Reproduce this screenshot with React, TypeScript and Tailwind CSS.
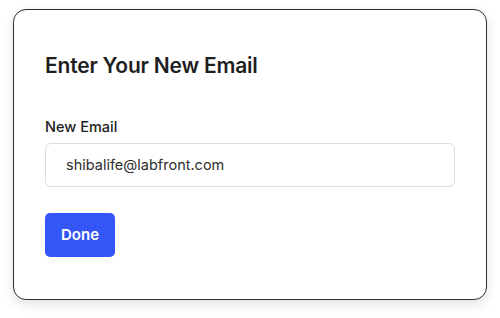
export default function App() {
  return (
    <div className="w-[500px] h-[318px] bg-white pt-[9px] px-[13px] font-['Inter',sans-serif]">
      <div className="h-[291px] rounded-[13px] border-[1.5px] border-[#2e2e2e] bg-white pl-[31px] pr-[31px] pt-[42px] shadow-[0_4px_12px_rgba(0,0,0,0.12)]">
        <h1 className="text-[21px] leading-[28px] font-semibold text-[#1f1f1f] tracking-[-0.2px]">
          Enter Your New Email
        </h1>
        <label className="mt-[37px] block text-[14.5px] leading-[20px] font-medium text-[#222]">
          New Email
        </label>
        <div className="mt-[6px] h-[44px] rounded-[6px] border border-[#dcdcdc] bg-white flex items-center pl-[20px]">
          <span className="text-[14.5px] text-[#2e2e2e]">shibalife@labfront.com</span>
        </div>
        <button className="mt-[26px] h-[44px] w-[70px] rounded-[5px] bg-[#3556f6] text-white text-[15px] font-semibold">
          Done
        </button>
      </div>
    </div>
  );
}
